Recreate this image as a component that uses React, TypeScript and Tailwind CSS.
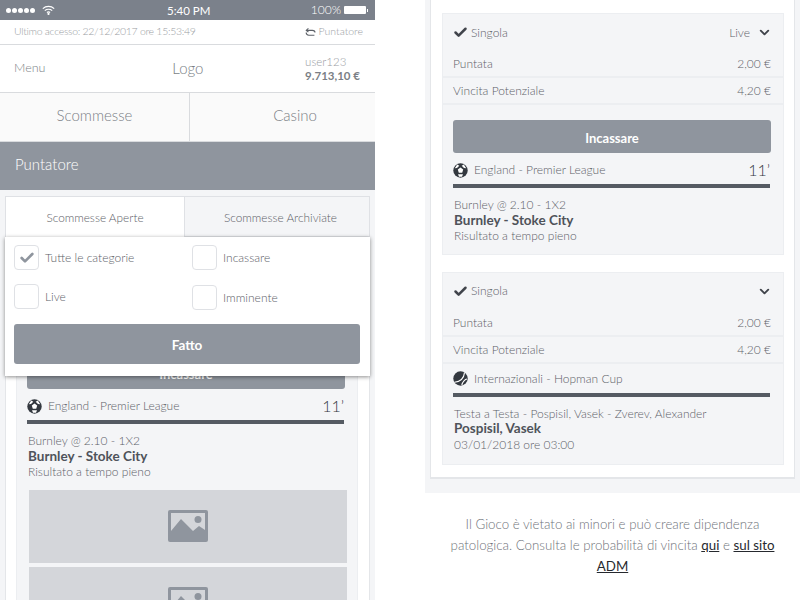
import { Check, ChevronDown } from "lucide-react";

const grey = "bg-[#8f959e]";

function Globe() {
  return (
    <svg width="15" height="15" viewBox="0 0 15 15" className="shrink-0">
      <circle cx="7.5" cy="7.5" r="7.2" fill="#33383f" />
      <path d="M7.5 4.6 10.2 6.6 9.2 9.7H5.8L4.8 6.6Z" fill="#fff" />
      <path d="M4.2 1.6 6.3 2.8 4 5 1.8 5.2Z M10.8 1.6 8.7 2.8 11 5 13.2 5.2Z M5 11.2H10L9 13.8H6Z" fill="#fff" />
    </svg>
  );
}

function Ball() {
  return (
    <svg width="15" height="15" viewBox="0 0 15 15" className="shrink-0">
      <circle cx="7.5" cy="7.5" r="7.2" fill="#33383f" />
      <path d="M11.5 1.6C11 6.5 7.5 10.5 1.6 11.2" fill="none" stroke="#fff" strokeWidth="1.1" />
      <path d="M14 8C12.2 8.2 9.6 10.6 8.8 14" fill="none" stroke="#fff" strokeWidth="1.1" />
    </svg>
  );
}

function Wifi() {
  return (
    <svg width="13" height="10" viewBox="0 0 13 10" fill="none" stroke="#fff" strokeWidth="1.2">
      <path d="M.8 3.6C4 .6 9 .6 12.2 3.6" />
      <path d="M2.8 5.6C4.9 3.8 8.1 3.8 10.2 5.6" />
      <path d="M4.9 7.5C5.9 6.8 7.1 6.8 8.1 7.5" />
      <circle cx="6.5" cy="8.9" r=".5" fill="#fff" />
    </svg>
  );
}

function Swap() {
  return (
    <svg width="11" height="9" viewBox="0 0 11 9" fill="none" stroke="#5d6168" strokeWidth="1.1">
      <path d="M1.5 2.4H7.4C9 2.4 10 3.4 10 4.6" />
      <path d="M3.4.4 1.3 2.4 3.4 4" />
      <path d="M1.2 4.6C1.2 6 2.2 7.2 3.8 7.2H9.4" />
    </svg>
  );
}

function ImageIcon() {
  return (
    <svg width="40" height="32" viewBox="0 0 40 32">
      <rect width="40" height="32" rx="2" fill="#8f959e" />
      <rect x="3" y="3" width="34" height="26" fill="#d4d6da" />
      <circle cx="30" cy="9.5" r="3.5" fill="#8f959e" />
      <path d="M3 21 13 9 25 21 31 16 37 20V29H3Z" fill="#8f959e" />
    </svg>
  );
}

function Row({ label, value }: { label: string; value: string }) {
  return (
    <div className="flex h-[27px] items-center justify-between border-b-2 border-[#eceef1] pl-[10px] pr-[12px] pt-px text-[12px] text-[#5d6168]">
      <span>{label}</span>
      <span>{value}</span>
    </div>
  );
}

function Pick({ label, on }: { label: string; on?: boolean }) {
  return (
    <div className="flex h-[25px] items-center gap-[6px]">
      <div className="flex h-[25px] w-[25px] items-center justify-center rounded-[4px] border border-[#dfe1e5]">
        {on && <Check className="h-4 w-4 text-[#8f959e]" strokeWidth={4} />}
      </div>
      <span className="text-[12px] text-[#5d6168]">{label}</span>
    </div>
  );
}

function Event(props: { icon: React.ReactNode; league: string; minute?: string; top: string; name: string; sub: string }) {
  return (
    <div className="pl-[10px] pr-[13px]">
      <div className="flex h-[29px] items-center gap-[6px] pt-px text-[12px] text-[#5d6168]">
        {props.icon}
        <span className="flex-1">{props.league}</span>
        {props.minute && <span className="text-[16px] text-[#33383f]">{props.minute}</span>}
      </div>
      <div className="h-[4px] bg-[#555b63]" />
      <div className="px-px pt-[9px] text-[12px] leading-[15.5px] text-[#5d6168]">
        <div>{props.top}</div>
        <div className="text-[13.5px] font-bold text-[#4f535a]">{props.name}</div>
        <div>{props.sub}</div>
      </div>
    </div>
  );
}

function SlipHead({ live }: { live?: boolean }) {
  return (
    <>
      <div className="flex h-[37px] items-center gap-[3px] pl-[10px] pr-[11px] text-[12px] text-[#5d6168]">
        <Check className="h-[15px] w-[15px] text-[#40444b]" strokeWidth={4} />
        <span className="flex-1">Singola</span>
        {live && <span className="mr-[4px]">Live</span>}
        <ChevronDown className="h-[15px] w-[15px] text-[#40444b]" strokeWidth={3} />
      </div>
      <Row label="Puntata" value="2,00 €" />
      <Row label="Vincita Potenziale" value="4,20 €" />
    </>
  );
}

function CardOne({ images }: { images?: boolean }) {
  return (
    <div className="border border-[#eceef1] bg-[#f4f5f7]">
      <SlipHead live />
      <div className="pl-[10px] pr-[12px] pt-[15px]">
        <div className={`${grey} flex h-[33px] items-center justify-center rounded-[3px] pt-[4px] text-[13px] font-bold text-white`}>
          Incassare
        </div>
      </div>
      <div className="pt-[2px]">
        <Event
          icon={<Globe />}
          league="England - Premier League"
          minute="11’"
          top="Burnley @ 2.10 - 1X2"
          name="Burnley - Stoke City"
          sub="Risultato a tempo pieno"
        />
      </div>
      {images ? (
        <div className="flex flex-col gap-[4px] pl-3 pr-[10px] pt-[10px]">
          <div className="flex h-[73px] items-center justify-center bg-[#d4d6da]">
            <ImageIcon />
          </div>
          <div className="flex h-[73px] items-center justify-center bg-[#d4d6da]">
            <ImageIcon />
          </div>
        </div>
      ) : (
        <div className="h-[10px]" />
      )}
    </div>
  );
}

function Phone() {
  return (
    <div className="h-[600px] w-[375px] shrink-0 overflow-hidden">
      <div className="grid h-5 grid-cols-3 items-center bg-[#7b818b] px-[6px] text-white">
        <div className="flex items-center gap-[7px]">
          <div className="flex gap-px">
            {[0, 1, 2, 3, 4].map((i) => (
              <span key={i} className="h-[5px] w-[5px] rounded-full bg-white" />
            ))}
          </div>
          <Wifi />
        </div>
        <div className="pl-[40px] pt-px text-[11.5px] font-normal">5:40 PM</div>
        <div className="flex items-center justify-end gap-[3px] pr-[1px] text-[12px] font-light">
          100%
          <span className="h-[8px] w-[22px] rounded-[1px] bg-white" />
          <span className="-ml-[2px] h-[3px] w-[1px] bg-white" />
        </div>
      </div>

      <div className="flex h-[25px] items-center justify-between border-b border-[#d9dbde] pl-[14px] pr-[12px] text-[10.5px] text-[#9a9da3]">
        <span className="tracking-[-0.3px]">Ultimo accesso: 22/12/2017 ore 15:53:49</span>
        <span className="flex items-center gap-[3px]">
          <Swap />
          Puntatore
        </span>
      </div>

      <div className="grid h-[48px] grid-cols-3 items-center border-b border-[#d9dbde] pl-[14px] pr-[15px] text-[#7b7f86]">
        <span className="text-[12.5px]">Menu</span>
        <span className="pb-px pl-[43px] text-[15px]">Logo</span>
        <div className="justify-self-end text-[11.5px] leading-[14px]">
          <div className="text-[#9a9da3]">user123</div>
          <div className="font-bold">9.713,10 €</div>
        </div>
      </div>

      <div className="flex h-[49px] border-b border-[#d9dbde] bg-[#fafafa] pb-[3px] text-[15px] text-[#7b7f86]">
        <div className="-mb-[3px] flex w-[190px] items-center justify-center border-r border-[#d9dbde] pb-[3px]">Scommesse</div>
        <div className="flex flex-1 items-center justify-center pl-[25px]">Casino</div>
      </div>

      <div className={`${grey} flex h-[48px] items-center pb-[3px] pl-[15px] text-[15px] text-white`}>Puntatore</div>

      <div className="bg-[#f4f5f7] pl-[5px] pr-[5px] pt-[6px]">
        <div className="flex h-[41px] pt-0 text-[11.8px] text-[#5d6168]">
          <div className="flex w-[179px] items-center justify-center border-l border-t border-[#dfe1e5] bg-white pt-[2px]">
            Scommesse Aperte
          </div>
          <div className="flex flex-1 items-center justify-center border border-[#dfe1e5] pl-[7px] pt-[2px]">Scommesse Archiviate</div>
        </div>
        <div className="relative border-x border-[#e4e6e9] bg-white pl-[10px] pr-[11px] pt-[12px]">
          <CardOne images />
          <div className="absolute -inset-x-px top-0 bg-white pb-3 pl-[9px] pr-[10px] pt-2 shadow-[0_1px_4px_rgba(0,0,0,0.45)]">
            <div className="flex">
              <div className="flex w-[178px] flex-col gap-[14px]">
                <Pick label="Tutte le categorie" on />
                <Pick label="Live" />
              </div>
              <div className="flex flex-col gap-[15px]">
                <Pick label="Incassare" />
                <Pick label="Imminente" />
              </div>
            </div>
            <div className={`${grey} mt-[14px] flex h-[40px] items-center justify-center rounded-[3px] pt-[2px] text-[13.5px] font-bold text-white`}>
              Fatto
            </div>
          </div>
        </div>
      </div>
    </div>
  );
}

function Slips() {
  return (
    <div className="ml-[50px] w-[375px] shrink-0">
      <div className="bg-[#f4f5f7] px-[5px] pb-[14px]">
        <div className="flex flex-col gap-[17px] border-x border-b-2 border-[#e4e6e9] bg-white pb-[12px] pl-[11px] pr-[10px] pt-[13px]">
          <CardOne />
          <div className="border border-[#eceef1] bg-[#f4f5f7]">
            <SlipHead />
            <Event
              icon={<Ball />}
              league="Internazionali - Hopman Cup"
              top="Testa a Testa - Pospisil, Vasek - Zverev, Alexander"
              name="Pospisil, Vasek"
              sub="03/01/2018 ore 03:00"
            />
            <div className="h-[12px]" />
          </div>
        </div>
      </div>
      <p className="px-[15px] pt-[21px] text-center text-[13.3px] leading-[21px] text-[#6f737a]">
        Il Gioco è vietato ai minori e può creare dipendenza patologica. Consulta le probabilità di vincita{" "}
        <a className="font-normal text-[#26292e] underline">qui</a> e{" "}
        <a className="font-normal text-[#26292e] underline">sul sito ADM</a>
      </p>
    </div>
  );
}

export default function App() {
  return (
    <div className="flex h-[600px] w-[800px] overflow-hidden bg-white font-['Lato',sans-serif] font-light">
      <Phone />
      <Slips />
    </div>
  );
}
